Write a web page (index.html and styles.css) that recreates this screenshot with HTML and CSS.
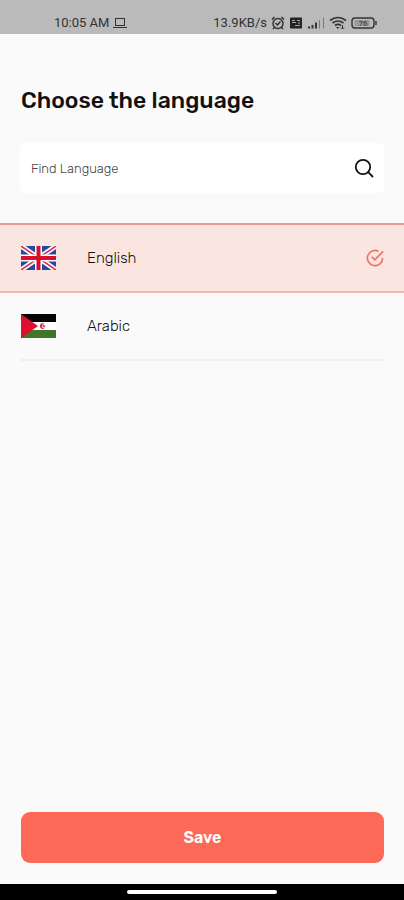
FILE: index.html
```html
<!DOCTYPE html>
<html lang="en">
<head>
<meta charset="utf-8">
<meta name="viewport" content="width=device-width, initial-scale=1">
<title>Choose the language</title>
<link rel="stylesheet" href="styles.css">
</head>
<body>
<header class="status">
  <div class="status-group">
    <span>10:05 AM</span>
    <svg width="14" height="12" viewBox="0 0 14 12" fill="none" stroke="currentColor"><rect x="2.5" y="1.5" width="9" height="7"/><path d="M0 10.5h14"/></svg>
  </div>
  <div class="status-group">
    <span>13.9KB/s</span>
    <svg width="14" height="14" viewBox="0 0 14 14" fill="none" stroke="currentColor" stroke-width="1.5"><circle cx="7" cy="7.5" r="5"/><path d="M4.5 7l2 2 3-3.5M1 3.5l2.500-2.500M13 3.500l-2.500-2.500M3.500 11.500l-1.500 1.500M10.500 11.500l1.500 1.500"/></svg>
    <svg width="14" height="12" viewBox="0 0 14 12"><rect x="1" y="0.5" width="12" height="11" rx="1" fill="#222"/><path d="M3 3.500h3M3 5.500h4M8 3.500h3M6 8.500h5M9 6h2" stroke="#aaa" fill="none"/></svg>
    <svg width="18" height="12" viewBox="0 0 18 12" fill="none" stroke="currentColor" stroke-width="2"><path d="M2 11.500v-2M5.500 11.500v-3.500M9 11.500v-6"/><path d="M12.500 11.500v-8.500M16.500 11.500v-11" stroke-width="1" stroke="#777"/></svg>
    <svg width="18" height="14" viewBox="0 0 18 14" fill="none" stroke="currentColor" stroke-width="1.700"><path d="M1 4.500q8-6 16 0M3.500 7q5.500-4 11 0M6 9.500q3-2.200 6 0"/><path d="M7 11h3.500l-1.700 2z" fill="currentColor" stroke="none"/><path d="M13.500 9v4M12 11.500l1.500 1.500 1.500-1.500" stroke-width="1"/></svg>
    <svg width="26" height="12" viewBox="0 0 26 12" fill="none" stroke="currentColor" stroke-width="1.400"><rect x="1" y="1" width="22" height="10" rx="3"/><path d="M25 4v4"/><rect x="3.500" y="3" width="15" height="6" fill="#999" stroke="none"/><text x="12" y="9" text-anchor="middle" font-size="8" fill="currentColor" stroke="none">76</text></svg>
  </div>
</header>
<main class="screen">
  <h1 class="title">Choose the language</h1>
  <label class="search">
    <input class="search-input" type="text" placeholder="Find Language" aria-label="Find Language">
    <svg width="20" height="20" viewBox="0 0 20 20" fill="none" stroke="#111" stroke-width="1.800" stroke-linecap="round"><circle cx="9" cy="9" r="7.200"/><path d="M14.200 14.200l4.300 4.300"/></svg>
  </label>
  <div class="languages" role="radiogroup" aria-label="Language">
    <label class="language">
      <input class="radio" type="radio" name="language" checked>
      <span class="row">
        <svg class="flag" viewBox="0 0 35 24"><rect width="35" height="24" fill="#2449a5"/><path d="M0 0l35 24M35 0L0 24" stroke="#fff" stroke-width="5"/><path d="M0 0l35 24M35 0L0 24" stroke="#dc2f48" stroke-width="1.600"/><path d="M17.500 0v24M0 12h35" stroke="#fff" stroke-width="7"/><path d="M17.500 0v24M0 12h35" stroke="#d80f2c" stroke-width="4"/></svg>
        <span>English</span>
        <svg class="check" width="18" height="18" viewBox="0 0 20 20" fill="none" stroke="#ee7467" stroke-width="1.900"><path d="M13.800 2.400A8.500 8.500 0 1 0 18.500 10"/><path d="M6.500 8.800l3.200 3.200L19 2.700"/></svg>
      </span>
    </label>
    <label class="language">
      <input class="radio" type="radio" name="language">
      <span class="row">
        <svg class="flag" viewBox="0 0 35 24"><rect width="35" height="24" fill="#fff"/><rect width="35" height="8" fill="#050505"/><rect y="16" width="35" height="8" fill="#427527"/><path d="M0 0l17 12L0 24z" fill="#dd102d"/><path d="M23.500 9.500a3 3 0 1 0 0 5a2.500 2.500 0 1 1 0-5z" fill="#d8263f"/><path d="M22.800 10l.5 1.400h1.500l-1.200.9.500 1.500-1.300-.9-1.300.9.500-1.500-1.200-.9h1.500z" fill="#d8263f"/></svg>
        <span>Arabic</span>
        <svg class="check" width="18" height="18" viewBox="0 0 20 20" fill="none" stroke="#ee7467" stroke-width="1.900"><path d="M13.800 2.400A8.500 8.500 0 1 0 18.500 10"/><path d="M6.500 8.800l3.200 3.200L19 2.700"/></svg>
      </span>
    </label>
  </div>
  <button class="save" type="button">Save</button>
</main>
<footer class="nav"><span class="handle"></span></footer>
</body>
</html>
```
FILE: styles.css
```css
* { box-sizing: border-box; }

body {
  margin: 0;
  min-height: 100vh;
  display: flex;
  flex-direction: column;
  background: #fafafa;
  color: #111;
  font-family: Rubik, Roboto, sans-serif;
}

.status {
  display: flex;
  justify-content: space-between;
  align-items: flex-end;
  height: 34px;
  padding: 0 27px 3px 54px;
  background: #bababa;
  color: #333;
  font-family: Roboto, sans-serif;
  font-size: 13px;
  line-height: 16px;
}

.status-group {
  display: flex;
  align-items: center;
  gap: 4px;
}

.screen {
  flex: 1;
  display: flex;
  flex-direction: column;
}

.title {
  margin: 50px 21px 27px;
  font-size: 23px;
  line-height: 32px;
  font-weight: 500;
}

.search {
  display: flex;
  align-items: center;
  height: 50px;
  margin: 0 20px 30px;
  padding: 0 10px 0 11px;
  border-radius: 6px;
  background: #fff;
}

.search-input {
  flex: 1;
  min-width: 0;
  padding: 0;
  border: 0;
  outline: 0;
  background: transparent;
  color: #111;
  font: inherit;
  font-size: 13px;
  font-weight: 300;
}

.search-input::placeholder {
  color: #444;
  opacity: 1;
}

.language {
  display: block;
  position: relative;
  padding: 0 20px;
  font-size: 15px;
  font-weight: 300;
  cursor: pointer;
}

.radio {
  position: absolute;
  opacity: 0;
}

.row {
  display: flex;
  align-items: center;
  height: 68px;
  border-bottom: 2px solid #f0f0f0;
}

.language:has(.radio:checked) {
  border-top: 2px solid #e69a92;
  border-bottom: 2px solid #f0b9b1;
  background: #fae5e1;
}

.radio:checked + .row {
  height: 66px;
  border-bottom: 0;
}

.flag {
  width: 35px;
  height: 24px;
  margin: 0 31px 0 1px;
}

.check {
  margin-left: auto;
  visibility: hidden;
}

.radio:checked + .row .check {
  visibility: visible;
}

.save {
  height: 51px;
  margin: auto 20px 21px 21px;
  border: 0;
  border-radius: 9px;
  background: #fd6957;
  color: #fff;
  font: inherit;
  font-size: 16px;
  font-weight: 600;
  cursor: pointer;
}

.nav {
  display: flex;
  justify-content: center;
  align-items: center;
  height: 16px;
  background: #000;
}

.handle {
  width: 150px;
  height: 4px;
  border-radius: 2px;
  background: #fff;
}
```
